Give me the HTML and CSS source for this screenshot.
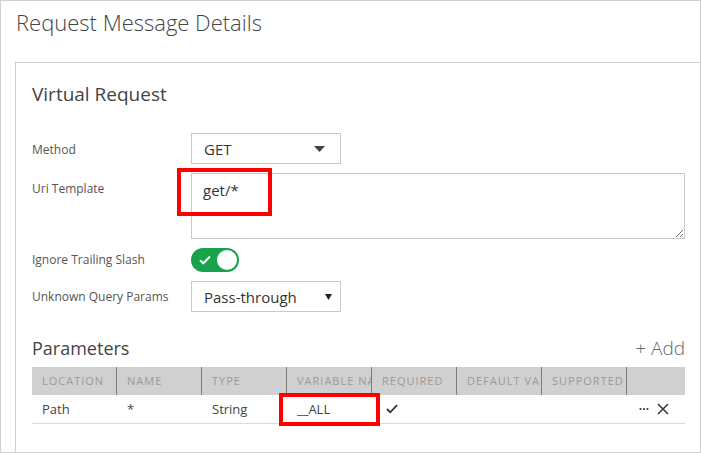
FILE: index.html
```html
<!DOCTYPE html>
<html>
<head>
<meta charset="utf-8">
<link rel="stylesheet" href="styles.css">
</head>
<body>
<div class="dialog">
  <div class="dlg-header">
    <h1 class="dlg-title">Request Message Details</h1>
  </div>
  <div class="panel">
    <h2 class="section-title">Virtual Request</h2>
    <div class="form">
      <label class="lbl lbl-method">Method</label>
      <div class="select select-method">
        <span>GET</span>
        <svg class="caret" width="11" height="6" viewBox="0 0 11 6"><path d="M0 0H11L5.5 6Z" fill="#444"/></svg>
      </div>
      <label class="lbl lbl-top">Uri Template</label>
      <textarea class="uri">get/*</textarea>
      <label class="lbl">Ignore Trailing Slash</label>
      <div class="toggle">
        <svg class="toggle-check" width="12" height="10" viewBox="0 0 12 10"><path d="M1 5.2L4.3 8.3L11 1.5" fill="none" stroke="#fff" stroke-width="2"/></svg>
        <span class="knob"></span>
      </div>
      <label class="lbl">Unknown Query Params</label>
      <div class="select select-native">
        <span>Pass-through</span>
        <svg class="caret-small" width="7" height="6" viewBox="0 0 7 6"><path d="M0 0H7L3.5 6Z" fill="#222"/></svg>
      </div>
    </div>
    <div class="params-head">
      <h2 class="section-title params-title">Parameters</h2>
      <span class="add">+ Add</span>
    </div>
    <div class="table">
      <div class="tr thead">
        <div class="th">Location</div>
        <div class="th">Name</div>
        <div class="th">Type</div>
        <div class="th">Variable Name</div>
        <div class="th">Required</div>
        <div class="th">Default Value</div>
        <div class="th">Supported</div>
        <div class="th th-last"></div>
      </div>
      <div class="tr trow">
        <div class="td">Path</div>
        <div class="td">*</div>
        <div class="td">String</div>
        <div class="td">__ALL</div>
        <div class="td td-check">
          <svg width="12" height="10" viewBox="0 0 12 10"><path d="M1 5L4.3 8.3L11 1.2" fill="none" stroke="#333" stroke-width="1.8"/></svg>
        </div>
        <div class="td"></div>
        <div class="td"></div>
        <div class="td td-actions">
          <svg width="10" height="4" viewBox="0 0 10 4"><circle cx="1.5" cy="2" r="1.1" fill="#333"/><circle cx="5" cy="2" r="1.1" fill="#333"/><circle cx="8.5" cy="2" r="1.1" fill="#333"/></svg>
          <svg width="12" height="12" viewBox="0 0 12 12"><path d="M1 1L11 11M11 1L1 11" stroke="#333" stroke-width="1.5"/></svg>
        </div>
      </div>
    </div>
  </div>
  <div class="mark mark-uri"></div>
  <div class="mark mark-var"></div>
</div>
</body>
</html>
```

FILE: styles.css
```css
* { box-sizing: border-box; }
html, body { margin: 0; padding: 0; background: #fff; }
body {
  width: 701px;
  height: 453px;
  font-family: "Open Sans", "Noto Sans", sans-serif;
  color: #444;
  overflow: hidden;
}
.dialog {
  position: relative;
  width: 701px;
  height: 453px;
  border: 1px solid #cfcfcf;
  display: flex;
  flex-direction: column;
}
.dlg-header {
  height: 61px;
  padding: 7px 0 0 15px;
}
.dlg-title {
  margin: 0;
  font-size: 22px;
  line-height: 28px;
  font-weight: 300;
  color: #444;
}
.panel {
  flex: 1;
  margin-left: 14px;
  border-top: 1px solid #cfcfcf;
  border-left: 1px solid #cfcfcf;
  padding: 0 15px 0 16px;
}
.section-title {
  margin: 17px 0 0 0;
  font-size: 19px;
  line-height: 28px;
  font-weight: 400;
  color: #444;
}
.form {
  margin-top: 25px;
  display: grid;
  grid-template-columns: 159px 1fr;
  row-gap: 9px;
  align-items: center;
}
.lbl {
  font-size: 12px;
  color: #555;
  line-height: 16px;
}
.lbl-method { padding-top: 2px; }
.lbl-top {
  align-self: start;
  line-height: 31px;
}
.select {
  width: 150px;
  height: 31px;
  border: 1px solid #c8c8c8;
  display: flex;
  align-items: center;
  justify-content: space-between;
  padding: 0 15px 0 12px;
  font-size: 15px;
  color: #333;
}
.select-native { padding-right: 8px; }
.caret { margin-top: 1px; }
.uri {
  display: block;
  width: 100%;
  height: 66px;
  border: 1px solid #c8c8c8;
  border-radius: 0;
  padding: 6px 11px;
  font-family: "Open Sans", "Noto Sans", sans-serif;
  font-size: 15px;
  line-height: 20px;
  color: #333;
  resize: both;
  outline: none;
}
.toggle {
  width: 48px;
  height: 24px;
  border-radius: 12px;
  background: #17a24b;
  display: flex;
  align-items: center;
  justify-content: space-between;
  padding: 0 2px 0 8px;
}
.knob {
  width: 20px;
  height: 20px;
  border-radius: 50%;
  background: #fff;
}
.params-head {
  margin-top: 22px;
  display: flex;
  justify-content: space-between;
  align-items: baseline;
}
.params-title { margin: 0; font-size: 18px; }
.add {
  font-size: 19px;
  line-height: 28px;
  font-weight: 300;
  color: #666;
}
.table { margin-top: 5px; }
.tr { display: flex; }
.thead {
  height: 28px;
  background: #d0d0d0;
}
.th {
  width: 85px;
  flex: none;
  border-right: 1px solid #7d7d7d;
  padding-left: 10px;
  font-size: 11px;
  letter-spacing: 1px;
  text-transform: uppercase;
  color: #9a9a9a;
  line-height: 28px;
  white-space: nowrap;
  overflow: hidden;
  text-overflow: clip;
}
.th-last { flex: 1; border-right: none; }
.trow {
  height: 29px;
  border-bottom: 1px solid #dcdcdc;
}
.td {
  width: 85px;
  flex: none;
  padding-left: 10px;
  font-size: 13px;
  line-height: 28px;
  color: #444;
  display: flex;
  align-items: center;
}
.td-check { padding-left: 14px; }
.td-actions {
  flex: 1;
  justify-content: flex-end;
  gap: 8px;
  padding-right: 16px;
}
.mark {
  position: absolute;
  border: 4px solid #f00;
}
.mark-uri { left: 176px; top: 167px; width: 95px; height: 48px; }
.mark-var { left: 278px; top: 392px; width: 101px; height: 33px; }
```
